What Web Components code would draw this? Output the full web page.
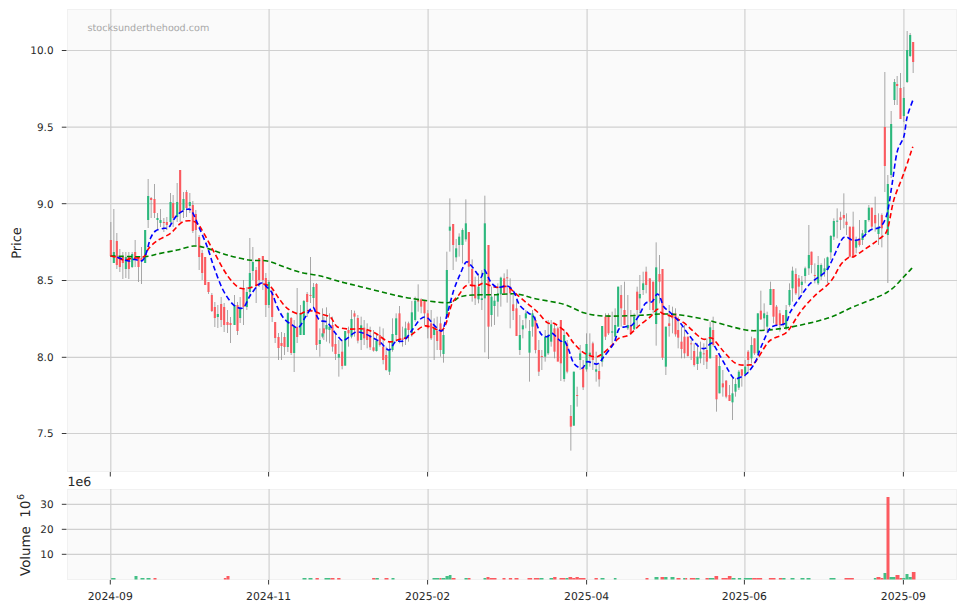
<!DOCTYPE html>
<html><head><meta charset="utf-8"><title>Price chart</title>
<style>html,body{margin:0;padding:0;background:#fff}</style></head>
<body><stock-figure></stock-figure>
<script>
const NS='http://www.w3.org/2000/svg';
const RED='#fb5a5f',GREEN='#2bb87d',GRID='#d0d0d0',INK='#262626';
const GX=[110.3,268.6,427.6,586.6,744.4,903.4];
const LABELS=['2024-09','2024-11','2025-02','2025-04','2025-06','2025-09'];
const PLOT_X=66.5;
const parse=(s,x0,y0,k)=>s.trim().split(/\n/).map(l=>{const p=l.trim().split(/\s+/);return{x:x0+p[0]/3,bt:y0+p[1]*k,bb:y0+p[2]*k,wt:y0+p[3]*k,wb:y0+p[4]*k,c:p[5]}});
const A=`331 240 256 222 257 r
340 252 263 209 263 g
349 241 265 233 269 r
358 257 267 249 272 r
367 257 263 252 279 r
376 257 269 252 278 g
385 257 269 252 279 r
395 254 267 252 268 g
404 252 257 240 267 r
414 257 267 257 282 r
423 258 261 247 284 r
434 230 263 230 263 g
443 196 220 179 228 g
452 198 200 197 218 r
462 199 213 184 218 r
471 218 220 213 230 g
480 220 223 209 227 g
490 222 223 218 232 r
499 222 225 217 230 r
510 202 222 193 227 g
518 203 218 195 227 r
530 202 217 183 222 g
539 170 213 170 222 r
549 199 210 192 218 g
558 192 208 190 217 r
568 202 206 193 213 g
577 205 231 201 233 r
586 214 230 210 245 r
596 237 257 235 270 r
605 253 273 250 280 r
614 257 285 257 285 r
624 282 292 282 294 r
634 295 311 293 312 r
643 307 318 302 327 r
652 314 317 305 328 g
662 304 320 297 327 r
671 307 325 303 332 r
681 322 325 310 333 r
690 323 325 317 343 r
702 305 325 295 325 g
711 305 331 302 335 r
719 308 318 297 323 g
729 288 307 280 325 r
739 292 307 287 310 g
748 273 292 238 297 g
757 262 271 247 280 g
767 270 285 267 303 r
776 258 280 258 287 r
787 256 280 256 290 r
796 278 305 273 317 r
805 282 305 280 308 g
815 292 317 288 322 r
824 322 338 322 343 r
834 337 348 333 360 r
843 343 346 332 360 r
852 337 347 333 355 r
862 313 347 312 352 g
872 318 353 317 355 r
881 327 353 320 372 g
890 327 337 288 343 r
900 313 335 305 335 g
910 301 335 300 335 g
920 294 302 292 317 r
930 295 296 257 303 r
939 287 298 283 307 g
948 284 345 283 350 r`;
const B=`-2 510 522 475 560 g
6 490 500 415 505 g
10 475 490 440 510 r
18 465 478 412 515 g
27 470 480 430 520 g
36 465 530 440 545 r
45 522 552 490 570 r
55 552 563 510 620 g
65 545 588 510 598 r
74 483 587 483 587 g
84 480 490 470 530 r
93 447 500 420 505 g
102 430 440 422 500 r
112 444 512 435 520 r
122 466 510 440 540 g
131 473 505 450 525 r
140 480 510 460 535 r
149 495 532 470 540 r
159 532 542 480 545 r
168 512 543 490 545 g
178 495 525 470 530 r
188 530 570 475 583 r
197 555 600 530 602 r
207 540 605 515 615 g
216 492 540 445 545 g
227 445 495 430 515 g
237 430 510 408 520 r
246 505 510 470 530 r
255 475 505 455 525 g
264 460 480 455 515 r
274 427 490 393 500 g
284 392 450 380 455 g
293 390 395 343 425 r
302 388 410 385 430 r
312 392 430 390 465 r
322 430 475 420 505 r
332 460 505 420 510 r
341 475 495 445 570 g
350 483 513 440 540 r
360 460 540 440 560 r
369 495 552 470 578 g
379 300 440 245 445 g
388 170 182 85 245 g
398 162 225 162 300 r
407 235 262 207 275 g
416 200 225 190 260 g
426 180 225 175 280 g
436 160 208 88 215 g
445 186 290 186 340 r
455 297 350 268 395 r
464 345 385 320 405 r
474 350 388 310 400 g
484 385 390 300 420 g
493 160 385 77 547 g
504 225 470 225 567 r
513 380 435 350 470 g
522 392 408 375 465 g
532 370 395 340 440 g
541 323 373 320 410 g
551 325 370 310 375 r
560 322 324 298 398 r
569 350 370 325 475 r
578 403 423 375 450 r
588 415 498 390 498 r
598 495 540 435 555 g
607 466 478 450 505 g
616 430 445 420 475 g
627 483 548 450 635 g
636 430 470 420 500 g
645 450 540 440 550 r
655 540 605 510 618 r
664 558 561 540 600 r
674 500 560 480 575 g
683 495 550 450 555 g
692 463 515 450 530 g
702 475 545 460 565 r
712 475 575 470 570 r
721 450 580 450 633 r
731 495 627 480 635 g
740 520 605 510 610 r
751 738 770 705 842 r
760 605 767 605 767 g
770 675 677 650 710 r
779 550 570 525 600 g
788 590 652 570 660 r
798 522 598 490 605 g
808 548 555 490 590 g
817 520 570 515 600 r
827 598 605 545 635 g
836 603 628 580 650 r
845 468 575 468 590 g
855 440 500 430 510 r
864 435 490 430 495 r
875 484 488 425 520 g
884 465 500 415 510 g
893 350 470 350 470 g
902 375 415 345 470 r
912 420 465 335 465 r
922 465 475 375 480 g
931 465 490 420 495 r
941 440 478 430 480 g
950 365 420 350 470 r
958 372 385 315 430 g`;
const C=`8 340 360 305 375 g
17 305 345 290 370 r
28 325 395 325 420 r
38 335 420 335 430 r
47 292 462 217 527 g
57 312 335 255 400 r
66 297 563 297 570 r
76 470 590 470 615 g
86 460 468 405 500 r
96 430 445 410 490 r
105 430 493 415 500 r
113 480 503 440 535 r
123 515 537 470 565 r
132 500 550 465 565 r
142 500 558 500 560 r
152 520 523 510 570 r
161 543 585 520 590 r
171 560 582 520 600 g
180 545 565 515 580 g
190 550 553 520 585 r
199 540 575 505 597 r
209 472 565 455 565 g
218 480 525 440 530 r
228 555 688 555 725 r
237 588 670 550 670 g
247 640 652 600 680 r
257 632 680 630 685 r
267 675 693 645 693 r
276 670 697 620 750 g
285 642 665 625 680 g
295 605 653 600 660 g
304 598 617 598 650 r
314 590 612 570 620 g
323 545 570 540 610 r
333 525 565 500 580 g
342 505 550 505 555 r
352 430 550 430 555 g
361 422 448 362 450 r
371 430 445 400 480 g
380 435 470 425 490 g
390 357 405 335 405 g
399 357 440 357 460 r
408 410 465 405 465 r
418 430 465 420 485 r
428 435 465 435 470 r
437 420 475 405 480 g
447 360 405 340 410 g
456 302 355 290 395 g
466 312 370 295 375 r
475 325 350 315 390 r
484 335 345 318 370 g
494 295 318 290 340 g
505 255 295 165 315 g
513 245 285 245 310 r
523 315 317 280 340 r
533 285 340 258 345 g
542 285 320 280 330 g
552 295 305 265 320 g
561 262 300 260 340 g
571 198 247 195 270 g
580 153 200 145 210 g
590 152 154 115 205 g
600 142 150 125 180 r
610 135 145 70 175 r
618 155 165 130 195 r
628 170 260 170 262 r
638 170 262 125 262 r
647 210 233 200 250 g
657 205 225 150 230 r
666 190 210 180 225 g
675 150 190 150 200 g
685 113 150 105 155 g
694 113 170 113 175 r
704 135 160 80 185 r
714 170 192 130 225 g
724 135 175 130 232 r`;
const D=`733 127 166 72 192 r
742 184 235 175 283 g
752 124 175 111 178 g
762 82 100 79 105 g
770 84 86 76 105 r
780 88 119 73 119 r
790 98 116 87 122 g
800 50 82 31 83 g
809 35 56 33 57 g
818 42 62 42 73 r`;
const CANDLES=[...parse(A,0,0,1),...parse(B,320,170,1/3),...parse(C,640,170,1/3),...parse(D,640,0,1)];
const pts=(s,x0,y0)=>s.trim().split(/\s+/).map(p=>{const [a,b]=p.split(',');return [x0+a/3,y0+b/3]});
const MA={
 blue:[...pts('350,262 385,273 400,268 425,272 437,250 450,205 465,183 490,175 505,172 530,135 560,118 575,125 595,170 620,230 640,290 665,355 690,395 710,412 730,412 750,375 780,340 800,352 815,370 830,410 850,445 875,465 895,472 915,440 937,412 950,440',0,170),
  ...pts('0,452 20,457 45,490 65,512 80,505 105,487 130,490 160,505 180,517 205,540 225,515 250,512 275,480 300,447 320,443 345,470 365,482 378,440 400,360 420,310 437,276 455,290 480,322 492,300 510,335 530,352 560,348 580,365 597,405 625,430 640,440 660,490 680,500 695,490 720,513 732,513 745,540 760,580 785,595 800,575 830,582 850,560 880,520 895,478 915,470 935,465 958,432',320,170),
  ...pts('15,400 35,395 50,372 60,385 70,410 90,428 120,460 145,495 175,530 195,535 215,520 240,560 260,595 280,625 300,622 320,610 345,575 360,535 385,480 400,468 435,460 450,425 480,380 510,340 555,305 575,270 600,215 615,200 635,210 660,207 690,180 720,170 740,130 755,40 770,-55 790,-100 800,-160 818,-212',640,170)],
 red:[...pts('330,258 350,262 370,270 395,265 430,260 445,235 470,212 510,190 540,160 565,152 590,160 610,190 640,245 670,300 695,335 720,355 750,353 780,342 810,350 835,385 860,415 895,432 920,422 945,425',0,170),
  ...pts('0,432 30,442 50,470 85,477 130,477 165,490 205,515 240,507 265,500 305,470 330,470 360,482 375,465 395,400 415,375 437,347 470,347 490,340 525,352 560,350 590,375 620,400 650,425 680,458 700,460 735,485 760,520 790,548 830,560 870,530 895,505 925,495 958,465',320,170),
  ...pts('30,440 50,418 65,430 95,440 130,458 170,495 190,508 215,505 250,545 285,580 325,585 345,575 380,520 400,505 440,485 480,425 520,380 570,335 600,285 625,262 640,260 670,240 715,208 740,180 760,90 790,10 817,-70',640,170)],
 green:[...pts('330,258 430,260 470,252 530,240 580,228 620,235 680,255 745,270 800,273 850,290 900,307',0,170),
  ...pts('0,318 60,335 120,350 200,370 270,385 380,398 420,380 460,375 520,374 590,372 640,385 730,403 790,428 850,438',320,170),
  ...pts('0,436 60,432 120,435 200,450 280,472 340,482 440,473 560,445 640,410 740,367 790,320 818,290',640,170)]
};
const vols=(s,x0)=>s.trim().split(/\s*;\s*/).map(e=>{const [a,b,t,c]=e.split(/\s+/);return{x0:x0+a/3,x1:x0+b/3,top:460+t/3,c}});
const VOLUMES=[
...vols('332 345 354 g;402 411 348 g;420 432 354 g;438 450 354 g;459 468 354 r;670 678 354 r;678 687 348 r;906 918 354 g;924 936 354 g;945 955 354 r',0),
...vols('12 30 354 g;30 42 354 r;50 60 354 r;155 165 354 r;165 175 354 g;192 204 354 r;213 222 354 g;336 357 354 g;357 363 354 r;363 375 354 g;375 385 348 g;385 393 345 g;393 405 354 r;432 442 354 g;442 450 354 r;489 498 354 g;498 507 351 r;507 528 354 r;546 555 354 r;565 575 354 r;582 594 354 r;621 635 354 r;640 657 354 r;657 669 354 g;687 698 354 g;698 708 351 r;717 735 354 r;735 744 354 g;744 755 351 r;755 765 354 r;765 775 351 r;775 795 354 r;822 832 354 r;840 852 354 g;880 888 354 g',320),
...vols('15 24 354 r;42 54 351 g;60 71 351 r;71 81 351 g;90 102 351 g;108 120 354 r;128 134 354 g;134 140 354 r;148 165 354 r;165 177 354 g;195 205 354 r;205 222 354 g;222 233 348 r;243 262 354 r;262 273 348 r;273 285 354 g;292 302 354 g;310 335 354 g;335 347 354 r;347 365 354 r;385 405 354 r;415 425 354 r;425 435 354 g;450 462 354 g;480 492 354 g;498 510 354 g;567 585 354 g;612 640 354 r;700 708 354 g;708 720 351 r;720 729 354 r;729 738 339 g;738 747 111 r;747 765 351 g;765 777 345 r;777 785 354 r;785 795 354 g;795 804 342 g;804 814 351 g;814 825 336 r',640)
];
function el(parent,tag,attrs,text){const n=document.createElementNS(NS,tag);for(const k in attrs)n.setAttribute(k,attrs[k]);if(text!=null)n.textContent=text;parent.appendChild(n);return n}
function smooth(p){let d='M'+p[0][0].toFixed(1)+' '+p[0][1].toFixed(1);for(let i=0;i<p.length-1;i++){const a=p[Math.max(i-1,0)],b=p[i],c=p[i+1],e=p[Math.min(i+2,p.length-1)];const t=.16;d+=` C${(b[0]+(c[0]-a[0])*t).toFixed(1)} ${(b[1]+(c[1]-a[1])*t).toFixed(1)} ${(c[0]-(e[0]-b[0])*t).toFixed(1)} ${(c[1]-(e[1]-b[1])*t).toFixed(1)} ${c[0].toFixed(1)} ${c[1].toFixed(1)}`}return d}
function drawGrid(svg,h,ys,top){
  for(const y of ys)el(svg,'line',{x1:0,x2:890,y1:y-top,y2:y-top,stroke:GRID,'stroke-width':1.2});
  for(const x of GX)el(svg,'line',{x1:x-PLOT_X,x2:x-PLOT_X,y1:0,y2:h,stroke:GRID,'stroke-width':1.2});
}
class YAxis extends HTMLElement{
  connectedCallback(){
    const h=+this.getAttribute('h'),top=+this.getAttribute('top');
    const ticks=JSON.parse(this.getAttribute('ticks'));
    const r=this.attachShadow({mode:'open'});
    r.innerHTML=`<style>:host{display:block;flex:none;width:66.5px;height:${h}px}svg{display:block;overflow:visible;font:10.4px "DejaVu Sans",sans-serif;fill:${INK};text-rendering:geometricPrecision}text{opacity:.99;white-space:pre}</style><svg width="66.5" height="${h}"></svg>`;
    const s=r.querySelector('svg');
    for(const [lab,y] of ticks){
      el(s,'line',{x1:61.8,x2:66.5,y1:y-top,y2:y-top,stroke:'#222','stroke-width':.9});
      el(s,'text',{x:53.5,y:y-top+3.8,'text-anchor':'end'},lab);
    }
    const lx=+this.getAttribute('lx'),ly=+this.getAttribute('ly');
    const t=el(s,'text',{transform:`translate(${lx} ${ly-top}) rotate(-90)`,'text-anchor':'middle','font-size':this.getAttribute('fs')||13},this.getAttribute('label'));
    const sup=this.getAttribute('sup');
    if(sup)el(t,'tspan',{dy:-5.5,dx:.5,'font-size':9.5},sup);
  }
}
customElements.define('y-axis',YAxis);
class PricePlot extends HTMLElement{
  connectedCallback(){
    const r=this.attachShadow({mode:'open'});
    r.innerHTML=`<style>:host{display:block;flex:none;width:890px;height:463px;background:#fafafa;box-shadow:inset 0 0 0 1px #f1f1f1}svg{display:block;font:9.6px "DejaVu Sans",sans-serif;text-rendering:geometricPrecision}text{opacity:.99}</style><svg width="890" height="463" viewBox="0 0 890 463"></svg>`;
    const s=r.querySelector('svg');const T=9,ox=PLOT_X;
    drawGrid(s,463,[50.5,127.2,203.7,280.5,357.3,433.5],T);
    for(const c of CANDLES)el(s,'line',{x1:c.x-ox,x2:c.x-ox,y1:c.wt-T,y2:c.wb-T,stroke:'#929292','stroke-width':.8});
    for(const c of CANDLES)el(s,'rect',{x:c.x-ox-1.05,width:2.1,y:c.bt-T,height:Math.max(c.bb-c.bt,1),fill:c.c=='r'?RED:GREEN});
    const st={blue:'#0000ff',red:'#ff0000',green:'#008000'};
    for(const k of ['green','red','blue'])el(s,'path',{d:smooth(MA[k].map(p=>[p[0]-ox,p[1]-T])),fill:'none',stroke:st[k],'stroke-width':1.6,'stroke-dasharray':'5.2 3'});
    el(s,'text',{x:87-ox,y:31-T,fill:'#a8a8a8'},'stocksunderthehood.com');
  }
}
customElements.define('price-plot',PricePlot);
class VolumePlot extends HTMLElement{
  connectedCallback(){
    const r=this.attachShadow({mode:'open'});
    r.innerHTML=`<style>:host{display:block;flex:none;width:890px;height:91px;background:#fafafa;box-shadow:inset 0 0 0 1px #f1f1f1}svg{display:block}</style><svg width="890" height="91" viewBox="0 0 890 91"></svg>`;
    const s=r.querySelector('svg');const T=489;
    drawGrid(s,91,[504.3,529.3,554.3],T);
    for(const v of VOLUMES)el(s,'rect',{x:v.x0-PLOT_X,width:v.x1-v.x0,y:v.top-T,height:579.5-v.top,fill:v.c=='r'?'#fc5a60':'#43bf85'});
  }
}
customElements.define('volume-plot',VolumePlot);
class TickStrip extends HTMLElement{
  connectedCallback(){
    const h=+this.getAttribute('h');const labels=this.hasAttribute('labels');const off=this.getAttribute('offset');
    const r=this.attachShadow({mode:'open'});
    r.innerHTML=`<style>:host{display:block;height:${h}px}svg{display:block;overflow:visible;font:10.8px "DejaVu Sans",sans-serif;fill:${INK};text-rendering:geometricPrecision}text{opacity:.99}</style><svg width="965" height="${h}"></svg>`;
    const s=r.querySelector('svg');
    GX.forEach((x,i)=>{
      el(s,'line',{x1:x,x2:x,y1:0,y2:4.5,stroke:'#222','stroke-width':.9});
      if(labels)el(s,'text',{x,y:20,'text-anchor':'middle'},LABELS[i]);
    });
    if(off)el(s,'text',{x:67.5,y:14.3,'font-size':12.6},off);
  }
}
customElements.define('tick-strip',TickStrip);
class ChartRow extends HTMLElement{
  constructor(){super();this.attachShadow({mode:'open'}).innerHTML=`<style>:host{display:flex;align-items:flex-start}</style><slot></slot>`}
}
customElements.define('chart-row',ChartRow);
class StockFigure extends HTMLElement{
  constructor(){super();
    const price=JSON.stringify([['10.0',50.5],['9.5',127.2],['9.0',203.7],['8.5',280.5],['8.0',357.3],['7.5',433.5]]);
    const vol=JSON.stringify([['30',504.3],['20',529.3],['10',554.3]]);
    this.attachShadow({mode:'open'}).innerHTML=`<style>:host{display:block;width:965px;height:611px;padding-top:9px;box-sizing:border-box;background:#fff;font-family:"DejaVu Sans",sans-serif;color:${INK}}</style>
    <chart-row><y-axis h="463" top="9" lx="21" ly="243" label="Price" ticks='${price}'></y-axis><price-plot></price-plot></chart-row>
    <tick-strip h="17" offset="1e6"></tick-strip>
    <chart-row><y-axis h="91" top="489" lx="29.5" ly="535" fs="13.4" label="Volume  10" sup="6" ticks='${vol}'></y-axis><volume-plot></volume-plot></chart-row>
    <tick-strip h="31" labels></tick-strip>`;
  }
}
customElements.define('stock-figure',StockFigure);
</script></body></html>
